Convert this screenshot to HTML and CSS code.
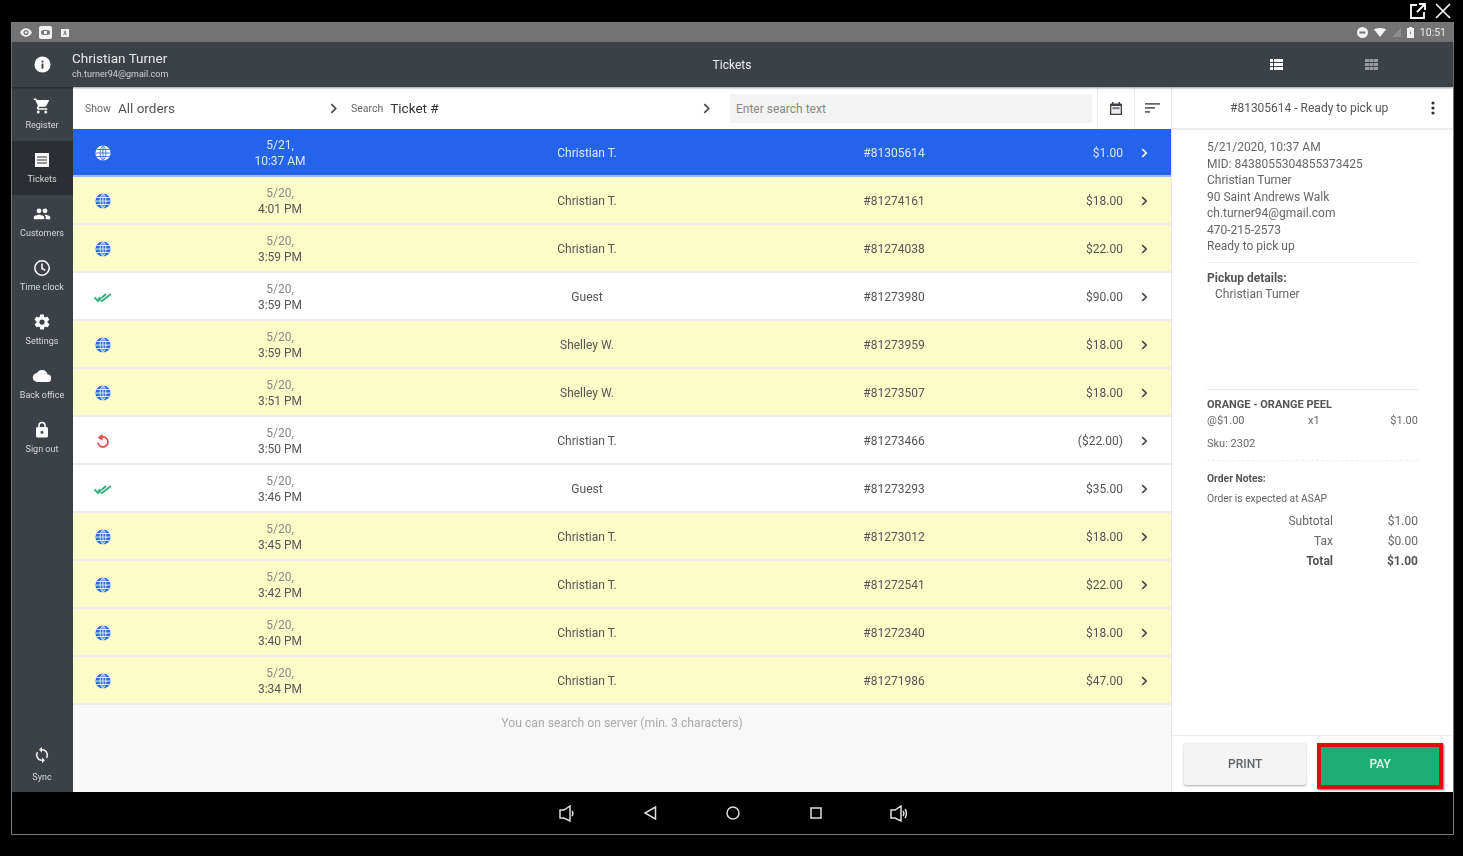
FILE: index.html
```html
<!DOCTYPE html>
<html lang="en">
<head>
    <meta charset="UTF-8">
    <title>Tickets</title>
    <link rel="stylesheet" href="styles.css">
</head>
<body>
    <div class="window-actions">
        <svg width="18" height="18" viewBox="0 0 18 18" fill="none" stroke="#fff" stroke-width="1.8"><path d="M8 3H2v13h13v-6M10 2h6v6M16 2L8 10"/></svg>
        <svg width="18" height="18" viewBox="0 0 18 18" fill="none" stroke="#fff" stroke-width="1.6"><path d="M2 2l14 14M16 2L2 16"/></svg>
    </div>

    <div class="device">
        <div class="status-bar">
            <div class="status-left">
                <svg width="12" height="9" viewBox="0 0 14 10"><path fill="#f2f2f2" d="M7 0C4 0 1.500 2 0 5c1.500 3 4 5 7 5s5.500-2 7-5c-1.500-3-4-5-7-5zm0 8a3 3 0 110-6 3 3 0 010 6z"/><circle cx="7" cy="5" r="1.500" fill="#f2f2f2"/></svg>
                <svg width="13" height="13" viewBox="0 0 13 13"><rect width="13" height="13" rx="2" fill="#f2f2f2"/><rect x="2" y="4" width="9" height="5" rx="2.500" fill="#777"/><rect x="5" y="5" width="3" height="3" fill="#f2f2f2"/></svg>
                <svg class="status-a" width="8" height="8" viewBox="0 0 9 9"><rect width="9" height="9" fill="#f2f2f2"/><path d="M3 7l1.500-5L6 7M3.500 5.500h2" stroke="#777" fill="none"/></svg>
            </div>
            <div class="status-right">
                <svg width="11" height="11" viewBox="0 0 11 11"><circle cx="5.500" cy="5.500" r="5.500" fill="#f2f2f2"/><rect x="2.500" y="4.500" width="6" height="2" fill="#777"/></svg>
                <svg width="12" height="9" viewBox="0 0 12 9"><path fill="#f2f2f2" d="M0 1.500C3.500-.5 8.500-.5 12 1.500L6 9z"/></svg>
                <svg width="9" height="9" viewBox="0 0 9 9"><path fill="#8e8e8e" d="M9 0v9H0z"/></svg>
                <svg width="7" height="11" viewBox="0 0 7 11"><path fill="#f2f2f2" d="M2 0h3v1h2v10H0V1h2z"/><path fill="#777" d="M4 3L2.500 6h1L3 8.500 4.500 5.500h-1z"/></svg>
                <span class="clock">10:51</span>
            </div>
        </div>

        <header class="app-header">
            <div class="header-info">
                <svg width="17" height="17" viewBox="0 0 18 18"><circle cx="9" cy="9" r="8.500" fill="#fff"/><rect x="8" y="8" width="2" height="5.500" fill="#3c4147"/><rect x="8" y="4.800" width="2" height="2" fill="#3c4147"/></svg>
            </div>
            <div class="user">
                <div class="user-name">Christian Turner</div>
                <div class="user-mail">ch.turner94@gmail.com</div>
            </div>
            <div class="header-title">Tickets</div>
            <div class="view-toggles">
                <div class="view-toggle">
                    <svg width="13" height="11" viewBox="0 0 13 11" fill="#fff"><path d="M0 0h3v3H0zM4 0h9v3H4zM0 4h3v3H0zM4 4h9v3H4zM0 8h3v3H0zM4 8h9v3H4z"/></svg>
                </div>
                <div class="view-toggle">
                    <svg width="13" height="11" viewBox="0 0 13 11" fill="#9a9da0"><path d="M0 0h4v3H0zM4.500 0h4v3h-4zM9 0h4v3H9zM0 4h4v3H0zM4.500 4h4v3h-4zM9 4h4v3H9zM0 8h4v3H0zM4.500 8h4v3h-4zM9 8h4v3H9z"/></svg>
                </div>
            </div>
        </header>

        <div class="app-body">
            <nav class="sidebar">
                <div class="nav-item">
                    <svg width="18" height="18" viewBox="0 0 24 24" fill="#fff"><path d="M7 18a2 2 0 100 4 2 2 0 000-4zM1 2v2h2l3.600 7.600-1.400 2.400c-.7 1.300.3 3 1.800 3h12v-2H7.400l1.100-2h7.500c.7 0 1.400-.4 1.700-1L21.300 5c.4-.7-.1-1-.8-1H5.200l-.9-2H1zm16 16a2 2 0 100 4 2 2 0 000-4z"/></svg>
                    <span>Register</span>
                </div>
                <div class="nav-item active">
                    <svg width="18" height="18" viewBox="0 0 18 18"><rect x="2" y="2" width="14" height="14" fill="#fff"/><path d="M4 6h10M4 9h10M4 12h10" stroke="#2b2e32" stroke-width="1.200"/></svg>
                    <span>Tickets</span>
                </div>
                <div class="nav-item">
                    <svg width="18" height="18" viewBox="0 0 24 24" fill="#fff"><path d="M16 11a3 3 0 100-6.500A3 3 0 0016 11zm-8 0a3 3 0 100-6.500A3 3 0 008 11zm0 2c-2.300 0-7 1.200-7 3.500V19h14v-2.500C15 14.200 10.300 13 8 13zm8 0h-1c1.200.9 2 2 2 3.500V19h6v-2.500c0-2.300-4.700-3.500-7-3.500z"/></svg>
                    <span>Customers</span>
                </div>
                <div class="nav-item">
                    <svg width="18" height="18" viewBox="0 0 18 18" fill="none" stroke="#fff" stroke-width="1.500"><circle cx="9" cy="9" r="7.200"/><path d="M9 4.500V9.500l3.200 1.800"/></svg>
                    <span>Time clock</span>
                </div>
                <div class="nav-item">
                    <svg width="18" height="18" viewBox="0 0 24 24" fill="#fff"><path fill-rule="evenodd" d="M19.400 13c.1-.3.100-.7.100-1s0-.7-.1-1l2.100-1.600c.2-.2.300-.4.100-.7l-2-3.400c-.1-.2-.4-.3-.6-.2l-2.500 1c-.5-.4-1.100-.7-1.700-1l-.4-2.700c0-.2-.2-.4-.5-.4h-4c-.3 0-.5.200-.5.400l-.4 2.700c-.6.300-1.200.6-1.700 1l-2.500-1c-.2-.1-.5 0-.6.200l-2 3.400c-.2.300-.1.500.1.700L4.600 11c-.1.300-.1.700-.1 1s0 .7.100 1l-2.100 1.600c-.2.200-.3.400-.1.700l2 3.400c.1.200.4.300.6.200l2.500-1c.5.400 1.100.7 1.700 1l.4 2.700c0 .2.200.4.500.4h4c.3 0 .5-.2.500-.4l.4-2.700c.6-.3 1.200-.6 1.700-1l2.500 1c.2.100.5 0 .6-.2l2-3.400c.2-.3.100-.5-.1-.7L19.400 13zM12 15.500a3.500 3.500 0 110-7 3.500 3.500 0 010 7z"/></svg>
                    <span>Settings</span>
                </div>
                <div class="nav-item">
                    <svg width="20" height="18" viewBox="0 0 24 24" fill="#fff"><path d="M19.400 10A7.500 7.500 0 005.400 8 6 6 0 006 20h13a5 5 0 00.400-10z"/></svg>
                    <span>Back office</span>
                </div>
                <div class="nav-item">
                    <svg width="18" height="18" viewBox="0 0 24 24" fill="#fff"><path fill-rule="evenodd" d="M18 8h-1V6A5 5 0 007 6v2H6a2 2 0 00-2 2v10c0 1.100.9 2 2 2h12a2 2 0 002-2V10a2 2 0 00-2-2zM9 6a3 3 0 116 0v2H9V6zm3 11a2 2 0 110-4 2 2 0 010 4z"/></svg>
                    <span>Sign out</span>
                </div>
                <div class="nav-item nav-sync">
                    <svg width="18" height="18" viewBox="0 0 24 24" fill="#e8e8e8"><path d="M12 4V1L8 5l4 4V6a6 6 0 015.200 9l1.500 1.500A8 8 0 0012 4zm0 14a6 6 0 01-5.200-9L5.300 7.500A8 8 0 0012 20v3l4-4-4-4v3z"/></svg>
                    <span>Sync</span>
                </div>
            </nav>

            <main class="tickets">
                <div class="toolbar">
                    <div class="filter filter-show">
                        <span class="filter-label">Show</span>
                        <span class="filter-value">All orders</span>
                        <svg class="chev" width="7" height="11" viewBox="0 0 8 12" fill="none" stroke="#444" stroke-width="1.900"><path d="M1.500 1l5 5-5 5"/></svg>
                    </div>
                    <div class="filter filter-search">
                        <span class="filter-label">Search</span>
                        <span class="filter-value dark">Ticket #</span>
                        <svg class="chev" width="7" height="11" viewBox="0 0 8 12" fill="none" stroke="#444" stroke-width="1.900"><path d="M1.500 1l5 5-5 5"/></svg>
                    </div>
                    <div class="search-box">Enter search text</div>
                    <div class="tool-btn">
                        <svg width="12" height="13" viewBox="0 0 12 13"><path fill="#3c4147" d="M2 0h1.500v1.500h5V0H10v1.500h1c.6 0 1 .4 1 1V12c0 .6-.4 1-1 1H1c-.6 0-1-.4-1-1V2.500c0-.6.4-1 1-1h1z"/><rect x="1.300" y="4" width="9.400" height="7.700" fill="#eee"/><rect x="2.500" y="5.200" width="7" height="2" fill="#777"/></svg>
                    </div>
                    <div class="tool-btn">
                        <svg width="15" height="10" viewBox="0 0 15 10" fill="#666"><path d="M0 0h15v1.800H0zM0 4h10v1.800H0zM0 8h5v1.800H0z"/></svg>
                    </div>
                </div>

                <div class="ticket-list">
                    <div class="ticket selected">
                        <svg class="ic" width="16" height="16" viewBox="0 0 16 16"><use href="#globe-white"/></svg>
                        <div class="when"><span>5/21,</span><span class="time">10:37 AM</span></div>
                        <div>Christian T.</div><div>#81305614</div><div class="amount">$1.00</div>
                        <svg class="chev-sm" width="7" height="10" viewBox="0 0 7 10"><use href="#chev"/></svg>
                    </div>
                    <div class="ticket pending">
                        <svg class="ic" width="16" height="16" viewBox="0 0 16 16"><use href="#globe"/></svg>
                        <div class="when"><span>5/20,</span><span class="time">4:01 PM</span></div>
                        <div>Christian T.</div><div>#81274161</div><div class="amount">$18.00</div>
                        <svg class="chev-sm" width="7" height="10" viewBox="0 0 7 10"><use href="#chev"/></svg>
                    </div>
                    <div class="ticket pending">
                        <svg class="ic" width="16" height="16" viewBox="0 0 16 16"><use href="#globe"/></svg>
                        <div class="when"><span>5/20,</span><span class="time">3:59 PM</span></div>
                        <div>Christian T.</div><div>#81274038</div><div class="amount">$22.00</div>
                        <svg class="chev-sm" width="7" height="10" viewBox="0 0 7 10"><use href="#chev"/></svg>
                    </div>
                    <div class="ticket">
                        <svg class="ic" width="18" height="11" viewBox="0 0 18 10"><use href="#checks"/></svg>
                        <div class="when"><span>5/20,</span><span class="time">3:59 PM</span></div>
                        <div>Guest</div><div>#81273980</div><div class="amount">$90.00</div>
                        <svg class="chev-sm" width="7" height="10" viewBox="0 0 7 10"><use href="#chev"/></svg>
                    </div>
                    <div class="ticket pending">
                        <svg class="ic" width="16" height="16" viewBox="0 0 16 16"><use href="#globe"/></svg>
                        <div class="when"><span>5/20,</span><span class="time">3:59 PM</span></div>
                        <div>Shelley W.</div><div>#81273959</div><div class="amount">$18.00</div>
                        <svg class="chev-sm" width="7" height="10" viewBox="0 0 7 10"><use href="#chev"/></svg>
                    </div>
                    <div class="ticket pending">
                        <svg class="ic" width="16" height="16" viewBox="0 0 16 16"><use href="#globe"/></svg>
                        <div class="when"><span>5/20,</span><span class="time">3:51 PM</span></div>
                        <div>Shelley W.</div><div>#81273507</div><div class="amount">$18.00</div>
                        <svg class="chev-sm" width="7" height="10" viewBox="0 0 7 10"><use href="#chev"/></svg>
                    </div>
                    <div class="ticket">
                        <svg class="ic" width="14" height="15" viewBox="0 0 14 15" fill="none" stroke="#e8483f" stroke-width="1.700"><path d="M3.300 4.500A5 5 0 112 8.500"/><path fill="#e8483f" stroke="none" d="M6.500 0v6.500L1.800 3.500z"/></svg>
                        <div class="when"><span>5/20,</span><span class="time">3:50 PM</span></div>
                        <div>Christian T.</div><div>#81273466</div><div class="amount">($22.00)</div>
                        <svg class="chev-sm" width="7" height="10" viewBox="0 0 7 10"><use href="#chev"/></svg>
                    </div>
                    <div class="ticket">
                        <svg class="ic" width="18" height="11" viewBox="0 0 18 10"><use href="#checks"/></svg>
                        <div class="when"><span>5/20,</span><span class="time">3:46 PM</span></div>
                        <div>Guest</div><div>#81273293</div><div class="amount">$35.00</div>
                        <svg class="chev-sm" width="7" height="10" viewBox="0 0 7 10"><use href="#chev"/></svg>
                    </div>
                    <div class="ticket pending">
                        <svg class="ic" width="16" height="16" viewBox="0 0 16 16"><use href="#globe"/></svg>
                        <div class="when"><span>5/20,</span><span class="time">3:45 PM</span></div>
                        <div>Christian T.</div><div>#81273012</div><div class="amount">$18.00</div>
                        <svg class="chev-sm" width="7" height="10" viewBox="0 0 7 10"><use href="#chev"/></svg>
                    </div>
                    <div class="ticket pending">
                        <svg class="ic" width="16" height="16" viewBox="0 0 16 16"><use href="#globe"/></svg>
                        <div class="when"><span>5/20,</span><span class="time">3:42 PM</span></div>
                        <div>Christian T.</div><div>#81272541</div><div class="amount">$22.00</div>
                        <svg class="chev-sm" width="7" height="10" viewBox="0 0 7 10"><use href="#chev"/></svg>
                    </div>
                    <div class="ticket pending">
                        <svg class="ic" width="16" height="16" viewBox="0 0 16 16"><use href="#globe"/></svg>
                        <div class="when"><span>5/20,</span><span class="time">3:40 PM</span></div>
                        <div>Christian T.</div><div>#81272340</div><div class="amount">$18.00</div>
                        <svg class="chev-sm" width="7" height="10" viewBox="0 0 7 10"><use href="#chev"/></svg>
                    </div>
                    <div class="ticket pending">
                        <svg class="ic" width="16" height="16" viewBox="0 0 16 16"><use href="#globe"/></svg>
                        <div class="when"><span>5/20,</span><span class="time">3:34 PM</span></div>
                        <div>Christian T.</div><div>#81271986</div><div class="amount">$47.00</div>
                        <svg class="chev-sm" width="7" height="10" viewBox="0 0 7 10"><use href="#chev"/></svg>
                    </div>
                </div>
                <div class="server-hint">You can search on server (min. 3 characters)</div>
            </main>

            <aside class="detail">
                <div class="detail-head">
                    <span class="detail-title">#81305614 - Ready to pick up</span>
                    <svg class="detail-more" width="4" height="14" viewBox="0 0 4 14" fill="#333"><circle cx="2" cy="2" r="1.600"/><circle cx="2" cy="7" r="1.600"/><circle cx="2" cy="12" r="1.600"/></svg>
                </div>
                <div class="detail-body">
                    <div class="customer">
                        <div>5/21/2020, 10:37 AM</div>
                        <div>MID: 8438055304855373425</div>
                        <div>Christian Turner</div>
                        <div>90 Saint Andrews Walk</div>
                        <div>ch.turner94@gmail.com</div>
                        <div>470-215-2573</div>
                        <div>Ready to pick up</div>
                    </div>
                    <div class="pickup">
                        <div class="pickup-title">Pickup details:</div>
                        <div class="pickup-name">Christian Turner</div>
                    </div>
                    <div class="item">
                        <div class="item-name">ORANGE - ORANGE PEEL</div>
                        <div class="item-line"><span>@$1.00</span><span>x1</span><span>$1.00</span></div>
                        <div class="item-sku">Sku: 2302</div>
                    </div>
                    <div class="notes">
                        <div class="notes-title">Order Notes:</div>
                        <div class="notes-text">Order is expected at ASAP</div>
                    </div>
                    <div class="totals">
                        <span>Subtotal</span><span>$1.00</span>
                        <span>Tax</span><span>$0.00</span>
                        <span class="total">Total</span><span class="total">$1.00</span>
                    </div>
                </div>
                <div class="detail-actions">
                    <div class="btn btn-print">PRINT</div>
                    <div class="btn btn-pay">PAY</div>
                </div>
            </aside>
        </div>

        <div class="nav-bar">
            <svg width="16" height="17" viewBox="0 0 16 17" fill="none" stroke="#ddd" stroke-width="1.500"><path d="M1 5h4l6-4v15l-6-3H1zM13 6c1 1.500 1 3.500 0 5"/></svg>
            <svg width="14" height="14" viewBox="0 0 14 14" fill="none" stroke="#ddd" stroke-width="1.500"><path d="M12.500 1v12L2 7z"/></svg>
            <svg width="14" height="14" viewBox="0 0 14 14" fill="none" stroke="#ddd" stroke-width="1.500"><circle cx="7" cy="7" r="6"/></svg>
            <svg width="12" height="12" viewBox="0 0 12 12" fill="none" stroke="#ddd" stroke-width="1.500"><rect x="1" y="1" width="10" height="10"/></svg>
            <svg width="18" height="17" viewBox="0 0 18 17" fill="none" stroke="#ddd" stroke-width="1.500"><path d="M1 5h4l6-4v15l-6-3H1zM13 6c1 1.500 1 3.500 0 5M15 4c1.800 2.500 1.800 6.500 0 9"/></svg>
        </div>
    </div>

    <svg class="defs" width="0" height="0">
        <defs>
            <g id="globe">
                <circle cx="8" cy="8" r="7.600" fill="#2f6fdc"/>
                <path d="M8 .5v15M.5 8h15M1.500 4.500h13M1.500 11.500h13M8 .5C4 4 4 12 8 15.500M8 .5c4 3.500 4 11.500 0 15" fill="none" stroke="#fff" stroke-width=".8"/>
            </g>
            <g id="globe-white">
                <circle cx="8" cy="8" r="7.600" fill="#fff"/>
                <path d="M8 .5v15M.5 8h15M1.500 4.500h13M1.500 11.500h13M8 .5C4 4 4 12 8 15.500M8 .5c4 3.500 4 11.500 0 15" fill="none" stroke="#2563eb" stroke-width=".8"/>
            </g>
            <g id="checks" fill="none" stroke="#35b27f" stroke-width="2">
                <path d="M.5 5l3.500 3.500L7 5.500M4.500 5l3.500 3.500L17 1.500M7.500 5.500L12 1.500"/>
            </g>
            <path id="chev" d="M1.200 1l4 4-4 4" fill="none" stroke="currentColor" stroke-width="1.700"/>
        </defs>
    </svg>
</body>
</html>
```

FILE: styles.css
```css
/* General */
body {
    margin: 0;
    width: 1463px;
    height: 856px;
    overflow: hidden;
    background-color: #000;
    font-family: Roboto, "Liberation Sans", sans-serif;
    color: #555;
}

.defs {
    display: block;
}

/* Top right popout and close */
.window-actions {
    height: 22px;
    display: flex;
    justify-content: flex-end;
    align-items: center;
    gap: 7px;
    padding-right: 11px;
}

/* Emulator frame */
.device {
    width: 1441px;
    height: 811px;
    margin-left: 11px;
    border: 1px solid #777;
    display: flex;
    flex-direction: column;
    filter: blur(0.35px);
}

.status-bar {
    height: 19px;
    flex: none;
    background: #737373;
    display: flex;
    justify-content: space-between;
    align-items: center;
    padding: 0 7px 0 8px;
}

.status-left,
.status-right {
    display: flex;
    align-items: center;
    gap: 6px;
}

.status-left {
    gap: 7px;
}

.status-a {
    margin-left: 2px;
}

.clock {
    font-size: 10.500px;
    color: #eee;
}

/* App header */
.app-header {
    height: 45px;
    flex: none;
    background: #3c4147;
    display: flex;
    align-items: center;
    color: #fff;
    box-shadow: 0 1px 2px rgba(0, 0, 0, 0.4);
    position: relative;
    z-index: 2;
}

.header-info {
    width: 60px;
    flex: none;
    display: flex;
    justify-content: center;
}

.user {
    width: 620px;
    flex: none;
}

.user-name {
    font-size: 13.500px;
    line-height: 17px;
    color: #e6e6e6;
    margin-bottom: 1px;
}

.user-mail {
    font-size: 9px;
    line-height: 12px;
    color: #d0d0d0;
}

.header-title {
    width: 80px;
    flex: none;
    text-align: center;
    font-size: 12px;
    color: #eee;
}

.view-toggles {
    margin-left: auto;
    padding-right: 34px;
    display: flex;
}

.view-toggle {
    width: 95px;
    display: flex;
    justify-content: center;
}

.app-body {
    height: 705px;
    flex: none;
    display: flex;
}

/* Sidebar */
.sidebar {
    width: 61px;
    flex: none;
    background: #3c4147;
    display: flex;
    flex-direction: column;
}

.nav-item {
    height: 54px;
    flex: none;
    box-sizing: border-box;
    padding: 10px 1px 0 0;
    display: flex;
    flex-direction: column;
    align-items: center;
    gap: 4px;
    font-size: 9px;
    line-height: 12px;
    color: #d8d8d8;
}

.nav-item.active {
    background: #2b2e32;
}

.nav-sync {
    margin-top: auto;
    height: 52px;
    padding-top: 6px;
    gap: 7px;
}

/* Ticket list */
.tickets {
    width: 1098px;
    flex: none;
    background: #f8f8f9;
    display: flex;
    flex-direction: column;
}

.toolbar {
    height: 42px;
    flex: none;
    box-sizing: border-box;
    background: #fff;
    display: flex;
    align-items: center;
}

.filter {
    display: flex;
    align-items: center;
    height: 100%;
    box-sizing: border-box;
}

.filter-show {
    width: 266px;
    padding-left: 12px;
}

.filter-search {
    width: 391px;
    padding-left: 12px;
}

.filter-label {
    font-size: 10.500px;
    color: #666;
    margin-right: 7px;
}

.filter-value {
    font-size: 13.500px;
    color: #555;
}

.filter-value.dark {
    color: #333;
}

.filter .chev {
    margin-left: auto;
    margin-right: 2px;
}

.filter-search .chev {
    margin-right: 20px;
}

.search-box {
    width: 362px;
    height: 29px;
    box-sizing: border-box;
    padding-left: 6px;
    background: #f3f3f3;
    font-size: 12px;
    line-height: 30px;
    color: #888;
    margin-right: 5px;
}

.tool-btn {
    height: 100%;
    width: 37px;
    flex: none;
    box-sizing: border-box;
    border-left: 1px solid #e8e8e8;
    display: flex;
    align-items: center;
    justify-content: center;
}

.tool-btn:last-child {
    width: 36px;
}

.ticket-list {
    display: flex;
    flex-direction: column;
}

.ticket {
    height: 48px;
    box-sizing: border-box;
    padding-top: 2px;
    border-bottom: 2px solid #ececec;
    background: #fff;
    display: grid;
    grid-template-columns: 60px 294px 320px 294px 82px 42px;
    align-items: center;
    justify-items: center;
    font-size: 12px;
    color: #555;
}

.ticket.pending {
    background: #fbfdc8;
}

.ticket.selected {
    background: #2563eb;
    color: #dde7fb;
    border-bottom-color: #9cbcf3;
}

.when {
    display: flex;
    flex-direction: column;
    align-items: center;
    line-height: 16px;
    color: #888;
}

.when .time {
    color: #555;
}

.selected .when,
.selected .when .time {
    color: #dde7fb;
}

.amount {
    justify-self: end;
}

.chev-sm {
    color: #444;
}

.selected .chev-sm {
    color: #fff;
}

.server-hint {
    text-align: center;
    margin-top: 10px;
    font-size: 12.200px;
    line-height: 16px;
    color: #aaa;
}

/* Detail panel */
.detail {
    flex: 1;
    min-width: 0;
    background: #fff;
    display: flex;
    flex-direction: column;
    border-left: 1px solid #e8e8e8;
}

.detail-head {
    height: 43px;
    flex: none;
    box-sizing: border-box;
    border-bottom: 2px solid #ececec;
    padding: 1px 18px 0 58px;
    display: flex;
    align-items: center;
    font-size: 12px;
    color: #555;
}

.detail-title {
    flex: 1;
}

.detail-body {
    flex: 1;
    min-height: 0;
    padding: 9px 35px 0;
    font-size: 12px;
    color: #666;
}

.customer {
    line-height: 16.500px;
    padding-bottom: 7px;
    border-bottom: 1px solid #f0f0f0;
}

.pickup {
    height: 127px;
    box-sizing: border-box;
    padding-top: 7px;
    border-bottom: 1px solid #e8e8e8;
    line-height: 16.500px;
}

.pickup-title {
    font-weight: 700;
    color: #555;
}

.pickup-name {
    padding-left: 8px;
}

.item {
    padding-top: 7px;
    height: 71px;
    box-sizing: border-box;
    border-bottom: 1px dashed #eee;
}

.item-name {
    font-size: 11px;
    font-weight: 700;
    line-height: 16px;
    color: #555;
}

.item-line {
    display: grid;
    grid-template-columns: 101px 1fr auto;
    font-size: 11px;
    line-height: 16px;
}

.item-sku {
    font-size: 11px;
    line-height: 14px;
    margin-top: 8px;
}

.notes {
    padding-top: 10px;
    font-size: 10.300px;
}

.notes-title {
    font-weight: 700;
    color: #555;
    line-height: 16px;
}

.notes-text {
    line-height: 16px;
    margin-top: 4px;
}

.totals {
    margin-top: 4px;
    display: grid;
    grid-template-columns: 126px 1fr;
    justify-items: end;
    font-size: 12px;
    line-height: 20px;
}

.total {
    font-weight: 700;
    color: #555;
}

.detail-actions {
    height: 57px;
    flex: none;
    box-sizing: border-box;
    border-top: 1px solid #eee;
    display: flex;
    padding: 7px 10px 3px 12px;
    gap: 11px;
}

.btn {
    display: flex;
    align-items: center;
    justify-content: center;
    font-size: 12px;
    font-weight: 500;
}

.btn-print {
    width: 123px;
    height: 42px;
    background: #f4f4f4;
    color: #5e6368;
    border-radius: 2px;
    box-shadow: 0 1px 2px rgba(0, 0, 0, 0.35);
}

.btn-pay {
    width: 126px;
    padding-bottom: 4px;
    background: #1aae74;
    color: #e6f6ef;
    border: 4px solid #e10b12;
    box-sizing: border-box;
    box-shadow: 1px 1px 2px rgba(0, 0, 0, 0.6);
}

/* Android buttons */
.nav-bar {
    flex: 1;
    display: grid;
    grid-template-columns: repeat(5, 83px);
    justify-content: center;
    justify-items: center;
    align-items: center;
    background: #000;
}
```
